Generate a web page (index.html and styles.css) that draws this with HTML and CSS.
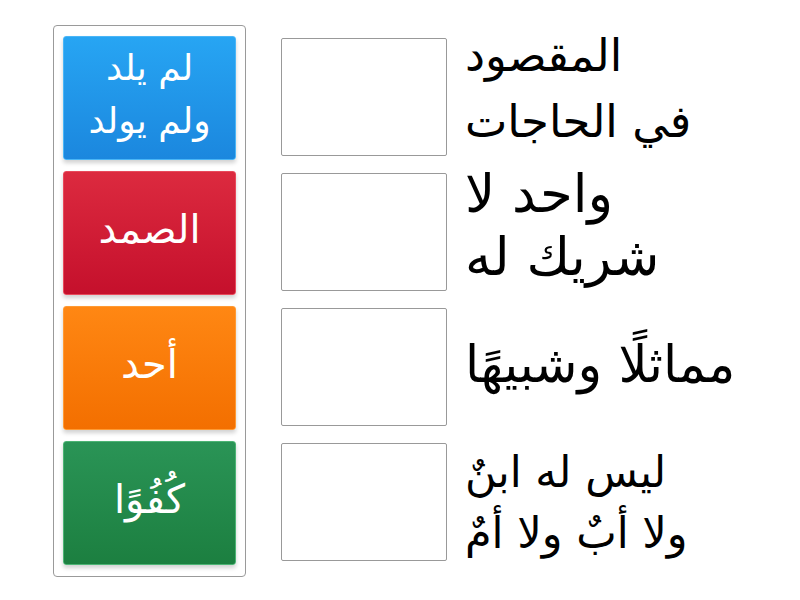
FILE: index.html
```html
<!DOCTYPE html>
<html lang="ar">
<head>
<meta charset="utf-8">
<link rel="stylesheet" href="styles.css">
</head>
<body>
<main class="game">
  <section class="bank">
    <div class="tile tile-blue tile-two"><span>لم يلد<br>ولم يولد</span></div>
    <div class="tile tile-red"><span>الصمد</span></div>
    <div class="tile tile-orange"><span>أحد</span></div>
    <div class="tile tile-green"><span>كُفُوًا</span></div>
  </section>
  <section class="targets">
    <div class="row">
      <div class="slot"></div>
      <div class="clue clue-1">المقصود<br>في الحاجات</div>
    </div>
    <div class="row">
      <div class="slot"></div>
      <div class="clue clue-2">واحد لا<br>شريك له</div>
    </div>
    <div class="row">
      <div class="slot"></div>
      <div class="clue clue-3">مماثلًا وشبيهًا</div>
    </div>
    <div class="row">
      <div class="slot"></div>
      <div class="clue clue-4">ليس له ابنٌ<br>ولا أبٌ ولا أمٌ</div>
    </div>
  </section>
</main>
</body>
</html>
```

FILE: styles.css
```css
html, body {
  margin: 0;
  padding: 0;
  background: #ffffff;
}

body {
  font-family: "DejaVu Sans", sans-serif;
}

.game {
  display: flex;
  align-items: flex-start;
  padding: 25px 0 0 53px;
}

.bank {
  display: flex;
  flex-direction: column;
  gap: 11px;
  padding: 10px 9px 11px 9px;
  border: 1px solid #9a9a9a;
  border-radius: 4px;
}

.tile {
  width: 173px;
  height: 124px;
  box-sizing: border-box;
  padding-bottom: 9px;
  border-radius: 3px;
  display: flex;
  align-items: center;
  justify-content: center;
  color: #ffffff;
  font-size: 40px;
  line-height: 50px;
  text-align: center;
  direction: rtl;
  box-shadow: 0 3px 4px rgba(0, 0, 0, 0.18);
}

.tile-two {
  font-size: 36px;
  line-height: 53px;
}

.tile-blue { background: linear-gradient(#27a5f3, #1b87de); border: 1px solid #4ab6f7; }
.tile-red { background: linear-gradient(#dc2a3f, #c5102c); border: 1px solid #e8495b; }
.tile-orange { background: linear-gradient(#ff8713, #f36f00); border: 1px solid #ff9a33; }
.tile-green { background: linear-gradient(#2a9456, #1c7f40); border: 1px solid #4cb474; }

.targets {
  display: grid;
  grid-template-columns: 166px auto;
  grid-auto-rows: 118px;
  column-gap: 18px;
  row-gap: 17px;
  margin: 13px 0 0 35px;
}

.row {
  display: contents;
}

.slot {
  box-sizing: border-box;
  border: 1px solid #999999;
  border-radius: 2px;
  background: #ffffff;
}

.clue {
  align-self: start;
  direction: rtl;
  text-align: left;
  color: #000000;
  white-space: nowrap;
}

.clue-1 {
  font-size: 45px;
  line-height: 66px;
  margin-top: -15px;
}

.clue-2 {
  font-size: 53px;
  line-height: 63px;
  margin-top: -11px;
}

.clue-3 {
  font-size: 51px;
  line-height: 62px;
  margin-top: 26px;
}

.clue-4 {
  font-size: 43px;
  line-height: 61px;
  margin-top: -1px;
}
```
